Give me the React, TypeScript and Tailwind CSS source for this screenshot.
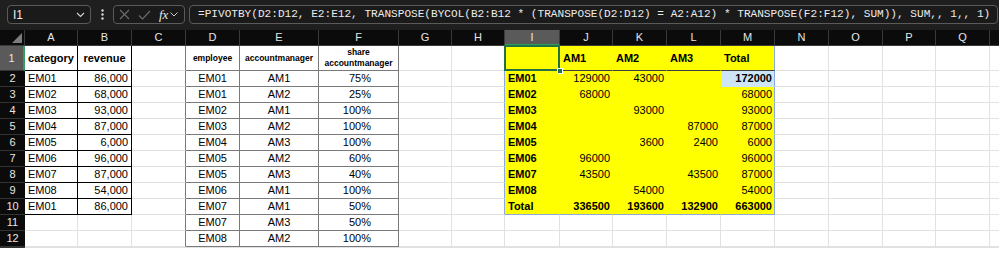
import { Fragment } from 'react';

type Cell = { t: string; a?: 'l' | 'c' | 'r'; b?: boolean; cls?: string };

const COLS = ['A', 'B', 'C', 'D', 'E', 'F', 'G', 'H', 'I', 'J', 'K', 'L', 'M', 'N', 'O', 'P', 'Q', 'R'];
const ROWS = 13;

const FORMULA =
  '=PIVOTBY(D2:D12, E2:E12, TRANSPOSE(BYCOL(B2:B12 * (TRANSPOSE(D2:D12) = A2:A12) * TRANSPOSE(F2:F12), SUM)), SUM,, 1,, 1)';

const revenue = [
  ['EM01', '86,000'],
  ['EM02', '68,000'],
  ['EM03', '93,000'],
  ['EM04', '87,000'],
  ['EM05', '6,000'],
  ['EM06', '96,000'],
  ['EM07', '87,000'],
  ['EM08', '54,000'],
  ['EM01', '86,000'],
];

const shares = [
  ['EM01', 'AM1', '75%'],
  ['EM01', 'AM2', '25%'],
  ['EM02', 'AM1', '100%'],
  ['EM03', 'AM2', '100%'],
  ['EM04', 'AM3', '100%'],
  ['EM05', 'AM2', '60%'],
  ['EM05', 'AM3', '40%'],
  ['EM06', 'AM1', '100%'],
  ['EM07', 'AM1', '50%'],
  ['EM07', 'AM3', '50%'],
  ['EM08', 'AM2', '100%'],
];

const pivot = [
  ['EM01', '129000', '43000', '', '172000'],
  ['EM02', '68000', '', '', '68000'],
  ['EM03', '', '93000', '', '93000'],
  ['EM04', '', '', '87000', '87000'],
  ['EM05', '', '3600', '2400', '6000'],
  ['EM06', '96000', '', '', '96000'],
  ['EM07', '43500', '', '43500', '87000'],
  ['EM08', '', '54000', '', '54000'],
  ['Total', '336500', '193600', '132900', '663000'],
];

function buildSheet() {
  const s: (Cell | null)[][] = Array.from({ length: ROWS }, () => Array(COLS.length).fill(null));
  // row index 0 = sheet row 1
  s[0][0] = { t: 'category', a: 'c', b: true };
  s[0][1] = { t: 'revenue', a: 'c', b: true };
  s[0][3] = { t: 'employee', a: 'c', b: true, cls: 'text-[8.5px]' };
  s[0][4] = { t: 'accountmanager', a: 'c', b: true, cls: 'text-[8.5px]' };
  s[0][5] = { t: 'share\naccountmanager', a: 'c', b: true, cls: 'text-[8.5px] leading-[11px] whitespace-pre-line' };
  revenue.forEach(([cat, rev], i) => {
    s[i + 1][0] = { t: cat, a: 'l' };
    s[i + 1][1] = { t: rev, a: 'r' };
  });
  shares.forEach(([emp, am, pct], i) => {
    s[i + 1][3] = { t: emp, a: 'c' };
    s[i + 1][4] = { t: am, a: 'c' };
    s[i + 1][5] = { t: pct, a: 'r', cls: 'pr-[27px]' };
  });
  ['AM1', 'AM2', 'AM3', 'Total'].forEach((h, i) => {
    s[0][9 + i] = { t: h, a: 'l', b: true };
  });
  pivot.forEach((row, i) => {
    const total = row[0] === 'Total';
    s[i + 1][8] = { t: row[0], a: 'l', b: true };
    row.slice(1).forEach((v, j) => {
      if (v) s[i + 1][9 + j] = { t: v, a: 'r', b: total || (i === 0 && j === 3), cls: 'pr-[2px]' };
    });
  });
  return s;
}

const sheet = buildSheet();

function cellClass(r: number, c: number) {
  // r is sheet row (1-based), c is column index (A = 0)
  const inRev = c <= 1 && r <= 10;
  const inShare = c >= 3 && c <= 5 && r <= 12;
  const inPivot = c >= 8 && c <= 12 && r <= 10;

  let right = 'border-r-[#e1e1e1]';
  if (inRev) right = 'border-r-black';
  else if (c === 2 && r <= 12) right = 'border-r-[#7a7a7a]';
  else if (inShare) right = 'border-r-[#7a7a7a]';
  else if (c === 7 && r <= 10) right = 'border-r-[#8ea9d8]';
  else if (inPivot) right = c === 12 ? 'border-r-[#8ea9d8]' : 'border-r-transparent';

  let bottom = 'border-b-[#e1e1e1]';
  if (inRev) bottom = 'border-b-black';
  else if (inShare) bottom = 'border-b-[#7a7a7a]';
  else if (inPivot) {
    if (r === 10) bottom = 'border-b-[#8ea9d8]';
    else if (r === 1 && c >= 9) bottom = 'border-b-[#3f3f3f]';
    else bottom = 'border-b-transparent';
  }

  let bg = 'bg-white';
  if (inPivot) bg = r === 2 && c === 12 ? 'bg-[#cde5f6]' : 'bg-[#ffff00]';

  return `border-r border-b ${right} ${bottom} ${bg}`;
}

function FormulaBar() {
  return (
    <div className="h-[30px] bg-[#1f1f1f] flex items-start pt-[5px] pl-[7px] gap-[4px]">
      <div className="w-[84px] h-[19px] rounded-[4px] border border-[#5a5a5a] bg-[#1a1a1a] flex items-center justify-between pl-[5px] pr-[5px] text-[#f0f0f0] text-[12px] font-['Liberation_Sans',sans-serif]">
        <span>I1</span>
        <svg width="9" height="6" viewBox="0 0 9 6" fill="none">
          <path d="M1 1l3.5 3.5L8 1" stroke="#d0d0d0" strokeWidth="1.2" />
        </svg>
      </div>
      <div className="w-[14px] h-[19px] flex items-center justify-center">
        <svg width="3" height="11" viewBox="0 0 3 11">
          <circle cx="1.5" cy="1.5" r="1.2" fill="#d8d8d8" />
          <circle cx="1.5" cy="5.5" r="1.2" fill="#d8d8d8" />
          <circle cx="1.5" cy="9.5" r="1.2" fill="#d8d8d8" />
        </svg>
      </div>
      <div className="w-[72px] h-[19px] rounded-[4px] border border-[#5a5a5a] bg-[#1a1a1a] flex items-center pl-[5px] gap-[8px]">
        <svg width="11" height="11" viewBox="0 0 11 11" fill="none">
          <path d="M1 1l9 9M10 1l-9 9" stroke="#6e6e6e" strokeWidth="1.1" />
        </svg>
        <svg width="13" height="10" viewBox="0 0 13 10" fill="none">
          <path d="M1 5.5l3.5 3.5L12 1" stroke="#6e6e6e" strokeWidth="1.1" />
        </svg>
        <span className="flex items-center gap-[2px]">
          <span className="font-['Liberation_Serif',serif] italic text-[13px] text-[#e8e8e8] leading-none">fx</span>
          <svg width="8" height="5" viewBox="0 0 8 5" fill="none">
            <path d="M0.5 0.5l3.5 3.5L7.5 0.5" stroke="#c8c8c8" strokeWidth="1" />
          </svg>
        </span>
      </div>
      <div className="w-[809px] h-[19px] rounded-[4px] border border-[#5a5a5a] bg-[#1a1a1a] flex items-center pl-[8px] overflow-hidden">
        <span className="font-['Liberation_Mono',monospace] text-[11.1px] text-[#ececec] whitespace-pre">{FORMULA}</span>
      </div>
    </div>
  );
}

export default function App() {
  return (
    <div className="w-[999px] h-[254px] overflow-hidden bg-white font-['Liberation_Sans',Arial,sans-serif] text-[11px] text-black">
      <FormulaBar />
      <div className="grid grid-cols-[25px_53px_54px_54px_54px_79px_80px_53px_53px_55px_53px_54px_54px_54px_54px_54px_53px_54px_60px] grid-rows-[16px_25px_repeat(11,16px)]">
        {/* corner */}
        <div className="bg-[#0b0b0b] border-r border-b border-[#3a3a3a] flex items-end justify-end p-[2px]">
          <svg width="10" height="10" viewBox="0 0 10 10">
            <path d="M10 0V10H0Z" fill="#7c7c7c" />
          </svg>
        </div>
        {COLS.map((l) => (
          <div
            key={l}
            className={`flex items-center justify-center text-[11px] text-[#e6e6e6] border-r border-[#3a3a3a] ${
              l === 'I' ? 'bg-[#5a5a5a] border-b-2 border-b-[#2e9e5e]' : 'bg-[#0b0b0b] border-b border-b-[#3a3a3a]'
            }`}
          >
            {l !== 'R' && l}
          </div>
        ))}

        {sheet.map((row, ri) => {
          const r = ri + 1;
          return (
            <Fragment key={r}>
              <div
                className={`flex items-center justify-center text-[11px] text-[#e6e6e6] border-b border-b-[#333333] ${
                  r === 1 ? 'bg-[#5a5a5a] border-r-2 border-r-[#2e9e5e]' : 'bg-[#0b0b0b]'
                }`}
              >
                {r < 13 && r}
              </div>
              {row.map((cell, c) => (
                <div
                  key={c}
                  className={`relative flex items-center px-[3px] whitespace-nowrap ${cellClass(r, c)} ${
                    cell?.a === 'r' ? 'justify-end' : cell?.a === 'c' ? 'justify-center text-center' : 'justify-start'
                  } ${cell?.b ? 'font-bold' : ''} ${cell?.cls ?? ''} ${r === 1 && c === 8 ? 'z-10' : 'overflow-hidden'}`}
                >
                  {cell?.t}
                  {r === 1 && c === 8 && (
                    <>
                      <div className="absolute left-[-1px] top-[-1px] right-[-1px] bottom-[-1px] border-2 border-[#217346] pointer-events-none" />
                      <div className="absolute right-[-4px] bottom-[-4px] w-[6px] h-[6px] bg-[#217346] border border-white" />
                    </>
                  )}
                </div>
              ))}
            </Fragment>
          );
        })}
      </div>
    </div>
  );
}
